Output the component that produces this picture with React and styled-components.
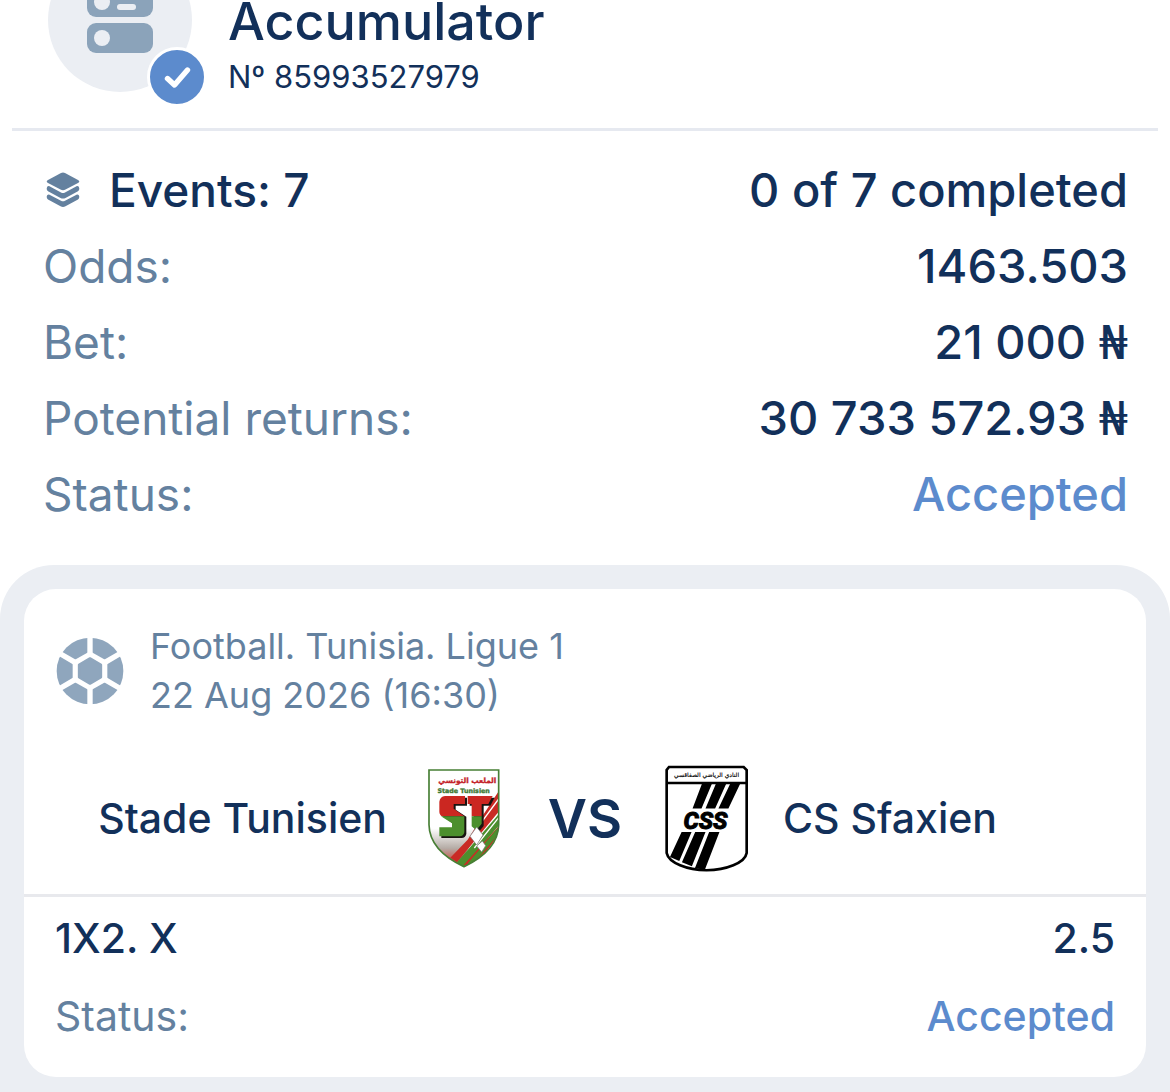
import styled, { createGlobalStyle } from 'styled-components';

const GlobalStyle = createGlobalStyle`
  body {
    margin: 0;
    background: #fff;
    color: #12305a;
    font-family: Inter, 'Liberation Sans', sans-serif;
  }
`

const Page = styled.main`
  display: flex;
  flex-direction: column;
  overflow: hidden;
`

const Header = styled.header`
  display: flex;
  align-items: flex-end;
  gap: 36px;
  margin: -52px 12px 0;
  padding: 0 36px 36px;
  border-bottom: 3px solid #e6e9f0;
`

const Avatar = styled.div`
  position: relative;
  display: flex;
  align-items: center;
  justify-content: center;
  width: 144px;
  height: 144px;
  border-radius: 50%;
  background: #ebeef3;
`

const Badge = styled.span`
  position: absolute;
  right: -15px;
  bottom: -15px;
  display: flex;
  border: 3px solid #fff;
  border-radius: 50%;
  background: #5c8bcd;
`

const Title = styled.h1`
  margin: 0;
  font-size: 52px;
  line-height: 80px;
  font-weight: 500;
`

const Number = styled.p`
  margin: 0;
  font-size: 31px;
  line-height: 30px;
`

const Summary = styled.dl`
  margin: 0;
  padding: 21px 42px 33px 43px;
`

const Row = styled.div`
  display: flex;
  align-items: center;
  justify-content: space-between;
  font-size: ${({ $small }) => ($small ? '41px' : '46px')};
  line-height: ${({ $small }) => ($small ? '78px' : '76px')};
`

const Label = styled.dt`
  display: flex;
  align-items: center;
  gap: 28px;
  color: ${({ $strong }) => ($strong ? '#12305a' : '#64819f')};
  font-weight: ${({ $strong }) => ($strong ? 500 : 400)};
`

const Value = styled.dd`
  margin: 0;
  color: ${({ $accent }) => ($accent ? '#5c8bcd' : '#12305a')};
  font-size: ${({ $large }) => ($large ? '47px' : 'inherit')};
  font-weight: 500;
`

const Currency = styled.span`
  font-family: 'DejaVu Sans', sans-serif;
  font-size: 46px;
  line-height: 1;
  font-weight: 400;
`

const Events = styled.section`
  padding: 24px 24px 48px;
  border-radius: 54px 54px 0 0;
  background: #ebeef3;
`

const Card = styled.article`
  border-radius: 32px;
  background: #fff;
`

const CardHead = styled.div`
  display: flex;
  align-items: center;
  gap: 26px;
  padding: 33px 32px 0;
  color: #64819f;
  font-size: 36px;
  line-height: 49px;
`

const Teams = styled.div`
  display: grid;
  grid-template-columns: 1fr 104px 138px 104px 1fr;
  align-items: center;
  height: 152px;
  padding: 22px 0 0;
  border-bottom: 3px solid #e8e9ed;
`

const Team = styled.span`
  padding: 0 25px;
  font-size: 41px;
  line-height: 48px;
  font-weight: 500;
  text-align: ${({ $home }) => ($home ? 'right' : 'left')};
`

const Crest = styled.span`
  display: flex;
  justify-content: center;
`

const Versus = styled.span`
  font-size: 54px;
  font-weight: 600;
  text-align: center;
`

const Picks = styled.dl`
  margin: 0;
  padding: 2px 31px 22px;
`

const CouponIcon = () => (
  <svg width='66' height='66' viewBox='0 0 66 66' aria-hidden='true'>
    <rect width='66' height='30' rx='9' fill='#8ba3ba' />
    <rect y='36' width='66' height='30' rx='9' fill='#8ba3ba' />
    <g fill='#ebeef3'>
      <circle cx='15' cy='15' r='8' />
      <circle cx='15' cy='51' r='8' />
      <rect x='30' y='7' width='29' height='6' rx='3' />
      <rect x='30' y='17' width='19' height='6' rx='3' />
    </g>
  </svg>
)

const CheckIcon = () => (
  <svg width='54' height='54' viewBox='0 0 54 54' aria-hidden='true'>
    <path d='M17.500 28.500l7 6.500L37.500 20' fill='none' stroke='#fff' strokeWidth='5.4' strokeLinecap='round' strokeLinejoin='round' />
  </svg>
)

const LayersIcon = () => (
  <svg width='38' height='36' viewBox='-2 0 38 36' fill='#64819f' aria-hidden='true'>
    <path d='M16 .9Q18 0 20 .9L33 7.900Q35.600 9.300 33 10.900L20.500 17.500Q18 18.800 15.500 17.500L3 10.900Q.400 9.300 3 7.900Z' />
    <path d='M4 14L16 20.400Q18 21.500 20 20.400L32 14Q34 13.800 34.300 16.200Q34.500 18.300 33 19.200L20.500 25.900Q18 27.200 15.500 25.900L3 19.200Q1.500 18.300 1.700 16.200Q2 13.800 4 14Z' />
    <path d='M4 22.400L16 28.800Q18 29.900 20 28.800L32 22.400Q34 22.200 34.300 24.600Q34.500 26.700 33 27.600L20.500 34.300Q18 35.600 15.500 34.300L3 27.600Q1.500 26.700 1.700 24.600Q2 22.200 4 22.400Z' />
  </svg>
)

const BallIcon = () => (
  <svg width='68' height='68' viewBox='-102 -102 204 204' aria-hidden='true'>
    <circle r='100' fill='#8fa6bd' />
    <path d='M0-59L52-30V30L0 59L-52 30V-30Z' fill='#fff' />
    <path d='M0-102V-50M0 102V50M88-51L45-26M-88-51L-45-26M88 51L45 26M-88 51L-45 26' stroke='#fff' strokeWidth='16' />
    <path d='M0-38L33-19V19L0 38L-33 19V-19Z' fill='#8fa6bd' stroke='#8fa6bd' strokeWidth='7' strokeLinejoin='round' />
  </svg>
)

const StadeCrest = () => (
  <svg width='72' height='99' viewBox='41 38 216 297' role='img' aria-label='Stade Tunisien'>
    <defs>
      <linearGradient id='fade' x1='0' y1='0' x2='0' y2='1'>
        <stop offset='0.600' stopColor='#fff' />
        <stop offset='0.800' stopColor='#b5aca6' />
        <stop offset='0.900' stopColor='#c4665b' />
      </linearGradient>
      <clipPath id='shield'>
        <path d='M44 41H253V205C252 262 205 304 149 331C92 304 45 262 44 205Z' />
      </clipPath>
    </defs>
    <g clipPath='url(#shield)'>
      <path d='M41 38H257V335H41Z' fill='url(#fade)' />
      <path d='M257 105L130 335H257Z' fill='#fff' />
      <path d='M253 105L204 180L160 250L108 304L128 318L253 166Z' fill='#c92b25' />
      <path d='M253 174L128 318L148 334L253 208Z' fill='#4c8f2d' />
      <path d='M253 210L148 326L180 335L253 235Z' fill='#c92b25' />
      <path d='M253 128L170 240M253 184L180 275' stroke='#fff' strokeWidth='4' />
      <path d='M253 222L166 325' stroke='#4c8f2d' strokeWidth='14' />
    </g>
    <g fill='#171310' transform='translate(6 5)'>
      <path d='M92 119H152V143H118V155L150 176V228Q147 240 136 240H75V213H112V198L75 172V136Q77 121 92 119ZM160 119H235L222 143H202V204L187 222L172 208V143H160Z' />
    </g>
    <path d='M92 119H152V143H118V157L150 180H84Q75 176 75 166V136Q77 121 92 119ZM160 119H235L222 143H202V180H172V143H160Z' fill='#cb2721' />
    <path d='M80 180H150V228Q147 240 136 240H75V213H113V201ZM172 180H202V202L186 222L172 210Z' fill='#4c8f2d' />
    <path d='M187 212L206 236L187 266L167 240ZM204 254L214 268L202 287L187 269Z' fill='#fff' stroke='#777' strokeWidth='2' />
    <path d='M44 41H253V205C252 262 205 304 149 331C92 304 45 262 44 205Z' fill='none' stroke='#477f35' strokeWidth='5' />
    <text x='159' y='80' textAnchor='middle' fontFamily='DejaVu Sans, sans-serif' fontSize='22' fontWeight='700' fill='#c4242b' stroke='#c4242b'>الملعب التونسي</text>
    <text x='148' y='111' textAnchor='middle' fontFamily='DejaVu Sans, sans-serif' fontSize='19' fontWeight='700' fill='#3f7934' stroke='#3f7934'>Stade Tunisien</text>
  </svg>
)

const SfaxienCrest = () => (
  <svg width='83' height='107' viewBox='31 28 250 320' role='img' aria-label='CS Sfaxien'>
    <path d='M43 33H268L277 42V292C272 322 215 343 156 344C98 343 42 322 36 292V42Z' fill='#fff' stroke='#000' strokeWidth='8' />
    <path d='M37 81H276' stroke='#000' strokeWidth='8' />
    <path d='M142 84H172L141 158H114ZM184 84H215L182 158H153ZM227 84H257L222 158H192Z' />
    <path d='M81 229H111L74 316L46 304ZM122 229H153L112 332L82 320ZM164 229H195L151 342L121 338Z' />
    <text x='153' y='219' textAnchor='middle' fontFamily='Roboto, Liberation Sans, sans-serif' fontSize='72' fontStyle='italic' fontWeight='800' stroke='#000' strokeWidth='3'>CSS</text>
    <text x='156' y='64' textAnchor='middle' fontFamily='DejaVu Sans, sans-serif' fontSize='18' stroke='#000' strokeWidth='0.500'>النادي الرياضي الصفاقسي</text>
  </svg>
)

const App = () => {
  return (
    <>
      <GlobalStyle />
      <Page>
        <Header>
          <Avatar>
            <CouponIcon />
            <Badge><CheckIcon /></Badge>
          </Avatar>
          <div>
            <Title>Accumulator</Title>
            <Number>Nº 85993527979</Number>
          </div>
        </Header>
        <Summary>
          <Row>
            <Label $strong><LayersIcon />Events: 7</Label>
            <Value $large>0 of 7 completed</Value>
          </Row>
          <Row>
            <Label>Odds:</Label>
            <Value $large>1463.503</Value>
          </Row>
          <Row>
            <Label>Bet:</Label>
            <Value $large>21 000 <Currency>₦</Currency></Value>
          </Row>
          <Row>
            <Label>Potential returns:</Label>
            <Value $large>30 733 572.93 <Currency>₦</Currency></Value>
          </Row>
          <Row>
            <Label>Status:</Label>
            <Value $large $accent>Accepted</Value>
          </Row>
        </Summary>
        <Events>
          <Card>
            <CardHead>
              <BallIcon />
              <div>
                <div>Football. Tunisia. Ligue 1</div>
                <time dateTime='2026-08-22T16:30'>22 Aug 2026 (16:30)</time>
              </div>
            </CardHead>
            <Teams>
              <Team $home>Stade Tunisien</Team>
              <Crest><StadeCrest /></Crest>
              <Versus>VS</Versus>
              <Crest><SfaxienCrest /></Crest>
              <Team>CS Sfaxien</Team>
            </Teams>
            <Picks>
              <Row $small>
                <Label $strong>1X2. X</Label>
                <Value>2.5</Value>
              </Row>
              <Row $small>
                <Label>Status:</Label>
                <Value $accent>Accepted</Value>
              </Row>
            </Picks>
          </Card>
        </Events>
      </Page>
    </>
  );
};

export default App;
